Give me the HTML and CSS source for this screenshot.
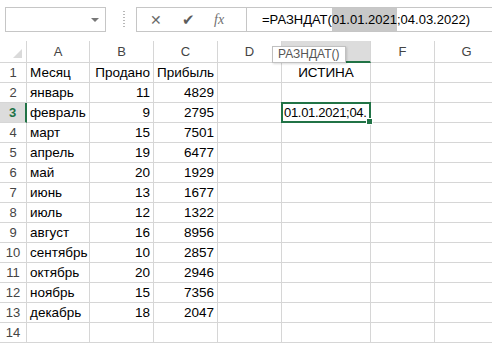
FILE: index.html
```html
<!DOCTYPE html>
<html lang="ru">
<head>
  <meta charset="UTF-8">
  <title>РАЗНДАТ</title>
  <link rel="stylesheet" href="styles.css">
</head>
<body>
  <div class="topbar">
    <div class="namebox"><span class="arrow"></span></div>
    <div class="grip"></div>
    <div class="formula">
      <div class="buttons">
        <span class="btn cancel">&#x2715;</span>
        <span class="btn ok">&#x2714;</span>
        <span class="btn fx">fx</span>
      </div>
      <div class="input">=РАЗНДАТ(<span class="sel">01.01.2021</span>;04.03.2022)</div>
    </div>
  </div>

  <div class="sheet" id="sheet"></div>
  <div class="tip">РАЗНДАТ()</div>

  <script>
    const rows = [
      ["Месяц", "Продано", "Прибыль"],
      ["январь", 11, 4829],
      ["февраль", 9, 2795],
      ["март", 15, 7501],
      ["апрель", 19, 6477],
      ["май", 20, 1929],
      ["июнь", 13, 1677],
      ["июль", 12, 1322],
      ["август", 16, 8956],
      ["сентябрь", 10, 2857],
      ["октябрь", 20, 2946],
      ["ноябрь", 15, 7356],
      ["декабрь", 18, 2047],
      ["", "", ""]
    ];
    // column E header sits under the tooltip
    const cols = ["A", "B", "C", "D", "", "F", "G"];
    const sheet = document.getElementById("sheet");

    function cell(cls, text) {
      const d = document.createElement("div");
      d.className = cls;
      d.textContent = text;
      sheet.appendChild(d);
      return d;
    }

    cell("corner", "");
    cols.forEach((c, i) => cell(i === 4 ? "colhdr active" : "colhdr", c));

    rows.forEach((r, i) => {
      const n = i + 1;
      cell(n === 3 ? "rowhdr active" : "rowhdr", n);
      cell("c", r[0]);
      cell("c num", r[1]);
      cell("c num", r[2]);
      cell("c", "");
      if (n === 1) {
        cell("c mid", "ИСТИНА");
      } else if (n === 3) {
        // only the part that fits in the cell is drawn
        cell("c cur", "01.01.2021;04.");
      } else {
        cell("c", "");
      }
      cell("c", "");
      cell("c", "");
    });
  </script>
</body>
</html>
```

FILE: styles.css
```css
html, body {
  margin: 0;
  padding: 0;
  background: #ffffff;
  width: 492px;
  height: 344px;
  overflow: hidden;
  font-family: "Liberation Sans", Arial, sans-serif;
  position: relative;
}

.topbar {
  height: 41px;
  box-sizing: border-box;
  padding: 7px 0 0 5px;
  display: flex;
  align-items: flex-start;
}

.namebox {
  width: 101px;
  height: 25px;
  box-sizing: border-box;
  border: 1px solid #c6c6c6;
  position: relative;
}

.arrow {
  position: absolute;
  right: 6px;
  top: 10px;
  border-left: 4px solid transparent;
  border-right: 4px solid transparent;
  border-top: 4px solid #777;
}

.grip {
  width: 2px;
  height: 17px;
  margin: 4px 11px 0 17px;
  background: repeating-linear-gradient(to bottom, #b8b8b8 0 1px, transparent 1px 3px);
}

.formula {
  flex: 1;
  height: 25px;
  box-sizing: border-box;
  border: 1px solid #c6c6c6;
  border-right: none;
  display: flex;
}

.buttons {
  width: 110px;
  flex: none;
  border-right: 1px solid #c6c6c6;
  display: flex;
  align-items: center;
  padding-left: 13px;
  box-sizing: border-box;
}

.btn {
  color: #6b6b6b;
  font-size: 14px;
  width: 35px;
}

.ok {
  color: #5c5c5c;
  font-size: 15px;
}

.fx {
  font-family: "Liberation Serif", serif;
  font-style: italic;
  font-size: 14px;
  color: #707070;
}

.input {
  padding-left: 15px;
  font-size: 13px;
  line-height: 23px;
  color: #000;
  white-space: nowrap;
}

.sel {
  background: #c8c8c8;
  display: inline-block;
}

.sheet {
  display: grid;
  grid-template-columns: 27px 63px 64px 64px 64px 89px 64px 64px;
  grid-template-rows: 22px repeat(14, 20px);
}

.sheet > div {
  box-sizing: border-box;
  border-right: 1px solid #d6d6d6;
  border-bottom: 1px solid #d6d6d6;
  white-space: nowrap;
  overflow: hidden;
}

.corner {
  position: relative;
}

.corner::after {
  content: "";
  position: absolute;
  right: 4px;
  bottom: 4px;
  border-left: 9px solid transparent;
  border-bottom: 9px solid #dadada;
}

.colhdr {
  text-align: center;
  font-size: 13px;
  line-height: 22px;
  color: #444;
}

.colhdr.active {
  background: #dcdcdc;
  border-bottom: 2px solid #217346;
}

.rowhdr {
  text-align: center;
  font-size: 13px;
  line-height: 20px;
  color: #444;
}

.rowhdr.active {
  background: #dcdcdc;
  color: #217346;
  font-weight: bold;
  border-right: 2px solid #217346;
}

.c {
  font-size: 13.5px;
  line-height: 20px;
  padding: 0 3px;
  color: #000;
}

.num {
  text-align: right;
}

.mid {
  text-align: center;
}

.sheet > .cur {
  border: 2px solid #217346;
  margin: -1px 0 0 -1px;
  padding: 0 0 0 1px;
  font-size: 13px;
  letter-spacing: -0.3px;
  line-height: 18px;
  position: relative;
  overflow: visible;
}

.cur::after {
  content: "";
  position: absolute;
  right: -4px;
  bottom: -4px;
  width: 5px;
  height: 5px;
  background: #217346;
  border: 1px solid #fff;
}

.tip {
  position: absolute;
  left: 272px;
  top: 46px;
  height: 17px;
  box-sizing: border-box;
  padding: 0 5px;
  border: 1px solid #c0c0c0;
  background: #fff;
  font-size: 12px;
  line-height: 15px;
  color: #555;
  box-shadow: 1px 1px 2px rgba(0,0,0,0.15);
}
```
